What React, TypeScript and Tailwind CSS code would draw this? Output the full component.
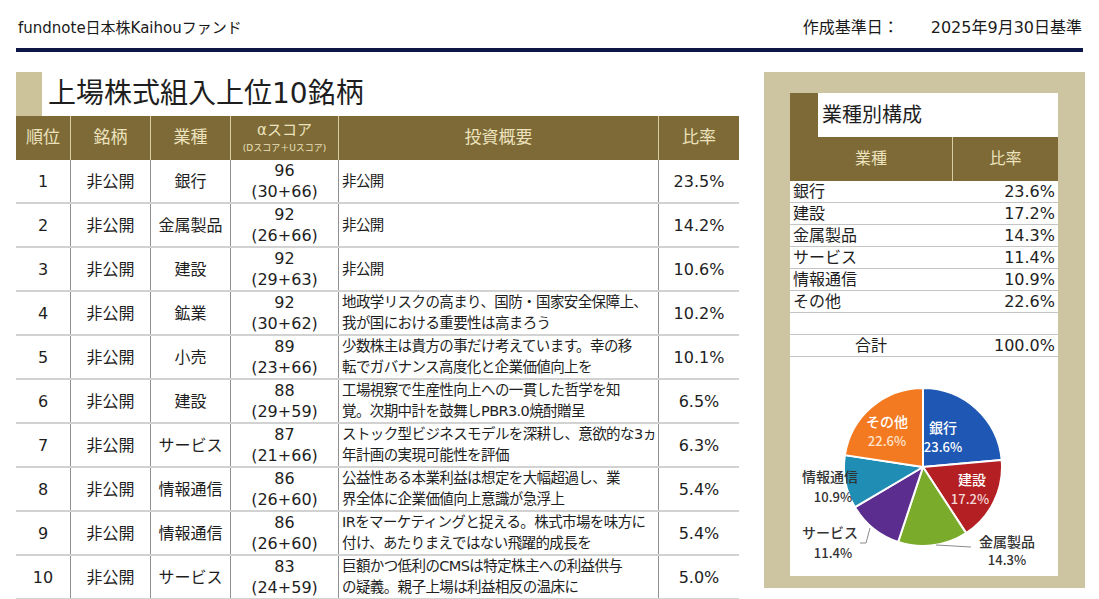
import React from "react";

const font = "font-['DejaVu_Sans','Noto_Sans_CJK_JP',sans-serif]";

type Row = {
  rank: string;
  sector: string;
  score: string;
  detail: string;
  text: string[];
  ratio: string;
};

const rows: Row[] = [
  { rank: "1", sector: "銀行", score: "96", detail: "(30+66)", text: ["非公開"], ratio: "23.5%" },
  { rank: "2", sector: "金属製品", score: "92", detail: "(26+66)", text: ["非公開"], ratio: "14.2%" },
  { rank: "3", sector: "建設", score: "92", detail: "(29+63)", text: ["非公開"], ratio: "10.6%" },
  {
    rank: "4",
    sector: "鉱業",
    score: "92",
    detail: "(30+62)",
    text: ["地政学リスクの高まり、国防・国家安全保障上、", "我が国における重要性は高まろう"],
    ratio: "10.2%",
  },
  {
    rank: "5",
    sector: "小売",
    score: "89",
    detail: "(23+66)",
    text: ["少数株主は貴方の事だけ考えています。幸の移", "転でガバナンス高度化と企業価値向上を"],
    ratio: "10.1%",
  },
  {
    rank: "6",
    sector: "建設",
    score: "88",
    detail: "(29+59)",
    text: ["工場視察で生産性向上への一貫した哲学を知", "覚。次期中計を鼓舞しPBR3.0焼酎贈呈"],
    ratio: "6.5%",
  },
  {
    rank: "7",
    sector: "サービス",
    score: "87",
    detail: "(21+66)",
    text: ["ストック型ビジネスモデルを深耕し、意欲的な3ヵ", "年計画の実現可能性を評価"],
    ratio: "6.3%",
  },
  {
    rank: "8",
    sector: "情報通信",
    score: "86",
    detail: "(26+60)",
    text: ["公益性ある本業利益は想定を大幅超過し、業", "界全体に企業価値向上意識が急浮上"],
    ratio: "5.4%",
  },
  {
    rank: "9",
    sector: "情報通信",
    score: "86",
    detail: "(26+60)",
    text: ["IRをマーケティングと捉える。株式市場を味方に", "付け、あたりまえではない飛躍的成長を"],
    ratio: "5.4%",
  },
  {
    rank: "10",
    sector: "サービス",
    score: "83",
    detail: "(24+59)",
    text: ["巨額かつ低利のCMSは特定株主への利益供与", "の疑義。親子上場は利益相反の温床に"],
    ratio: "5.0%",
  },
];

const sectors = [
  { name: "銀行", ratio: "23.6%", value: 23.6, color: "#1f58b4" },
  { name: "建設", ratio: "17.2%", value: 17.2, color: "#b31f22" },
  { name: "金属製品", ratio: "14.3%", value: 14.3, color: "#7aab2a" },
  { name: "サービス", ratio: "11.4%", value: 11.4, color: "#5a2d8e" },
  { name: "情報通信", ratio: "10.9%", value: 10.9, color: "#1f8db4" },
  { name: "その他", ratio: "22.6%", value: 22.6, color: "#f47a21" },
];

function slicePath(cx: number, cy: number, r: number, a0: number, a1: number) {
  const pt = (a: number) => [
    cx + r * Math.sin((a * Math.PI) / 180),
    cy - r * Math.cos((a * Math.PI) / 180),
  ];
  const [x0, y0] = pt(a0);
  const [x1, y1] = pt(a1);
  const large = a1 - a0 > 180 ? 1 : 0;
  return `M${cx},${cy} L${x0},${y0} A${r},${r} 0 ${large} 1 ${x1},${y1} Z`;
}

function PieChart() {
  const total = sectors.reduce((s, x) => s + x.value, 0);
  let acc = 0;
  const slices = sectors.map((s) => {
    const a0 = (acc / total) * 360;
    acc += s.value;
    const a1 = (acc / total) * 360;
    return { ...s, a0, a1 };
  });
  const cx = 133;
  const cy = 110;
  const r = 79;

  return (
    <svg width="268" height="219" viewBox="0 0 268 219" className="block">
      {slices.map((s) => (
        <path
          key={s.name}
          d={slicePath(cx, cy, r, s.a0, s.a1)}
          fill={s.color}
          stroke="#ffffff"
          strokeWidth="2"
          strokeLinejoin="round"
        />
      ))}
      <g fontFamily="'Noto Sans CJK JP', sans-serif" fontSize="14" fontWeight="500" textAnchor="middle">
        <text x="153" y="76" fill="#ffffff">銀行</text>
        <text x="153" y="95" fill="#ffffff" fontSize="13">23.6%</text>
        <text x="182" y="128" fill="#ffffff">建設</text>
        <text x="180" y="147" fill="#f4d7d7" fontSize="13">17.2%</text>
        <text x="97" y="70" fill="#ffffff">その他</text>
        <text x="97" y="89" fill="#ffe3cc" fontSize="13">22.6%</text>
        <text x="40" y="125" fill="#333333">情報通信</text>
        <text x="43" y="145" fill="#333333" fontSize="13">10.9%</text>
        <text x="40" y="181" fill="#333333">サービス</text>
        <text x="43" y="201" fill="#333333" fontSize="13">11.4%</text>
        <text x="217" y="190" fill="#333333">金属製品</text>
        <text x="217" y="208" fill="#333333" fontSize="13">14.3%</text>
      </g>
      <polyline points="80,171 76,186 70,186" fill="none" stroke="#8a8a8a" strokeWidth="1" />
      <polyline points="146,188 181,190" fill="none" stroke="#8a8a8a" strokeWidth="1" />
    </svg>
  );
}

function TopTable() {
  const cols = "grid grid-cols-[54px_80px_80px_108px_320px_81px]";
  return (
    <div className="w-[723px]">
      <div className={`${cols} h-[44px] bg-[#7d6a37] text-[#ece2bd] text-[17px]`}>
        <div className="flex items-center justify-center">順位</div>
        <div className="flex items-center justify-center border-l border-[#d9cda3]">銘柄</div>
        <div className="flex items-center justify-center border-l border-[#d9cda3]">業種</div>
        <div className="flex flex-col items-center justify-center border-l border-[#d9cda3] leading-none">
          <span className="text-[15px]">αスコア</span>
          <span className="text-[9px] mt-[6px]">(Dスコア＋Uスコア)</span>
        </div>
        <div className="flex items-center justify-center border-l border-[#d9cda3]">投資概要</div>
        <div className="flex items-center justify-center border-l border-[#d9cda3]">比率</div>
      </div>
      {rows.map((r) => (
        <div
          key={r.rank}
          className={`${cols} h-[44px] border-b-2 border-[#d2d2d2] text-[16px] text-[#1e1e1e] leading-[21px]`}
        >
          <div className="flex items-center justify-center">{r.rank}</div>
          <div className="flex items-center justify-center border-l border-[#8f8f8f]">非公開</div>
          <div className="flex items-center justify-center border-l border-[#8f8f8f]">{r.sector}</div>
          <div className="flex flex-col items-center justify-center border-l border-[#8f8f8f]">
            <span>{r.score}</span>
            <span>{r.detail}</span>
          </div>
          <div className="flex flex-col justify-center border-l border-[#8f8f8f] pl-[3px] text-[14.5px] tracking-[-0.6px] whitespace-nowrap">
            {r.text.map((t) => (
              <span key={t}>{t}</span>
            ))}
          </div>
          <div className="flex items-center justify-center border-l border-[#8f8f8f]">{r.ratio}</div>
        </div>
      ))}
    </div>
  );
}

function SectorPanel() {
  return (
    <div className="w-[321px] h-[516px] bg-[#cdc5a1] pt-[21px] pl-[26px] pr-[27px]">
      <div className="h-[483px] bg-white flex flex-col">
        <div className="flex h-[44px]">
          <div className="w-[28px] bg-[#7d6a37]" />
          <div className="flex items-center pl-[4px] text-[20px] text-[#1e1e1e]">業種別構成</div>
        </div>
        <div className="grid grid-cols-[162px_106px] h-[44px] bg-[#7d6a37] text-[#ece2bd] text-[16px]">
          <div className="flex items-center justify-center">業種</div>
          <div className="flex items-center justify-center border-l border-[#d9cda3]">比率</div>
        </div>
        {sectors.map((s) => (
          <div
            key={s.name}
            className="flex justify-between items-center h-[22px] border-b border-[#c4c4c4] px-[3px] text-[16px] leading-none text-[#1e1e1e]"
          >
            <span>{s.name}</span>
            <span>{s.ratio}</span>
          </div>
        ))}
        <div className="h-[22px] border-b border-[#c4c4c4]" />
        <div className="grid grid-cols-[162px_106px] h-[22px] border-b border-[#c4c4c4] items-center text-[16px] leading-none text-[#1e1e1e]">
          <span className="text-center">合計</span>
          <span className="text-right pr-[3px]">100.0%</span>
        </div>
        <PieChart />
      </div>
    </div>
  );
}

export default function App() {
  return (
    <div className={`w-[1099px] h-[599px] overflow-hidden bg-white ${font}`}>
      <div className="flex justify-between items-center h-[48px] pt-[8px] pl-[18px] pr-[17px] text-[#1a1a1a]">
        <span className="text-[15px]">fundnote日本株Kaihouファンド</span>
        <span className="text-[16px]">
          作成基準日：<span className="ml-[32px]">2025年9月30日基準</span>
        </span>
      </div>
      <div className="mx-[16px] h-[4px] bg-[#0e1648]" />
      <div className="flex mt-[20px] pl-[16px] gap-[25px]">
        <div className="flex flex-col">
          <div className="flex h-[44px]">
            <div className="w-[26px] bg-[#cdc39a]" />
            <div className="flex items-center pl-[6px] text-[28px] text-[#1e1e1e]">上場株式組入上位10銘柄</div>
          </div>
          <TopTable />
        </div>
        <SectorPanel />
      </div>
    </div>
  );
}
